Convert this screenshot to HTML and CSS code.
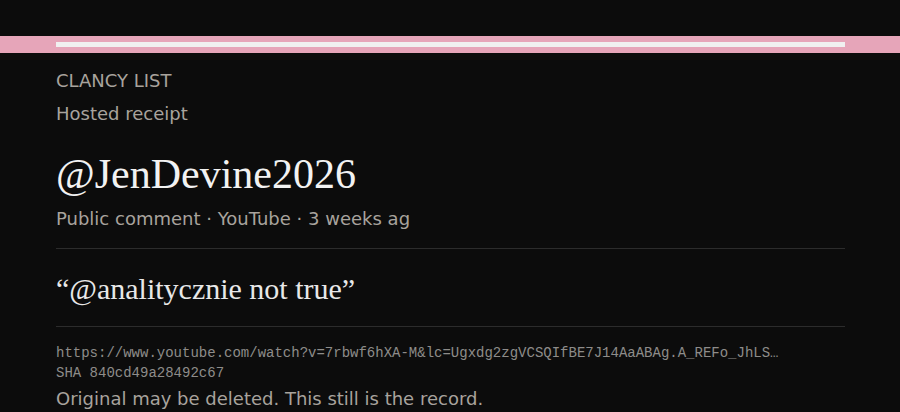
FILE: index.html
```html
<!DOCTYPE html>
<html lang="en">
<head>
<meta charset="utf-8">
<title>Hosted receipt</title>
<link rel="stylesheet" href="styles.css">
</head>
<body>
<div class="band"><div class="band-inner"></div></div>
<main class="receipt">
  <div class="brand">CLANCY LIST</div>
  <div class="kind">Hosted receipt</div>
  <h1 class="author">@JenDevine2026</h1>
  <div class="meta">Public comment · YouTube · 3 weeks ag</div>
  <blockquote class="quote">“@analitycznie not true”</blockquote>
  <div class="source">
    <div class="url">https://www.youtube.com/watch?v=7rbwf6hXA-M&amp;lc=Ugxdg2zgVCSQIfBE7J14AaABAg.A_REFo_JhLS…</div>
    <div class="sha">SHA 840cd49a28492c67</div>
    <div class="note">Original may be deleted. This still is the record.</div>
  </div>
</main>
</body>
</html>
```
FILE: styles.css
```css
html, body {
  margin: 0;
  padding: 0;
  background: #0c0c0c;
  height: 100%;
  overflow: hidden;
}
body {
  font-family: "DejaVu Sans", sans-serif;
  color: #a8a39d;
}
.band {
  margin-top: 36px;
  background: #e6a5b9;
  padding: 6px 55px 6px 56px;
}
.band-inner {
  height: 5px;
  background: #f0f0f0;
}
.receipt {
  padding: 14px 55px 0 56px;
}
.brand {
  font-size: 18px;
  line-height: 27px;
}
.kind {
  font-size: 18px;
  line-height: 27px;
  margin-top: 6px;
}
.author {
  margin: 22px 0 0;
  font-family: "Liberation Serif", serif;
  font-weight: normal;
  font-size: 42px;
  line-height: 50px;
  color: #f2f2f2;
}
.meta {
  margin-top: 6px;
  font-size: 18px;
  line-height: 27px;
  padding-bottom: 16px;
  border-bottom: 1px solid #2c2c2c;
}
.quote {
  margin: 0;
  padding: 20px 0 18px;
  font-family: "Liberation Serif", serif;
  font-size: 30px;
  line-height: 39px;
  color: #e8e8e8;
  border-bottom: 1px solid #2c2c2c;
}
.source {
  padding-top: 16px;
}
.url, .sha {
  font-family: "Liberation Mono", monospace;
  font-size: 14px;
  line-height: 20px;
  color: #8e8c8a;
  white-space: nowrap;
}
.note {
  margin-top: 2px;
  font-size: 18px;
  line-height: 27px;
}
```
